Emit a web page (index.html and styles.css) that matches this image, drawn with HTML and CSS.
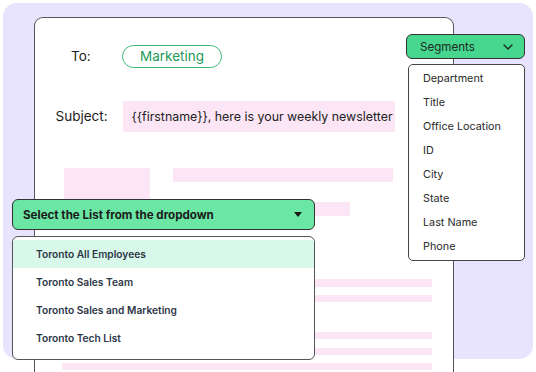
FILE: index.html
```html
<!DOCTYPE html>
<html lang="en">
<head>
    <meta charset="UTF-8">
    <meta name="viewport" content="width=device-width, initial-scale=1.0">
    <title>Newsletter segments</title>
    <link rel="stylesheet" href="styles.css">
</head>
<body>
    <div class="panel">
        <div class="card">
            <div class="to-row">
                <span class="to-label">To:</span>
                <span class="pill">Marketing</span>
            </div>
            <div class="subject-row">
                <span class="subject-label">Subject:</span>
                <span class="subject-box">{{firstname}}, here is your weekly newsletter</span>
            </div>
            <div class="lines">
                <div class="line-top">
                    <div class="block"></div>
                    <div class="col">
                        <div class="bar bar-a"></div>
                        <div class="bar bar-b"></div>
                    </div>
                </div>
                <div class="bar bar-c"></div>
                <div class="bar bar-d"></div>
                <div class="bar bar-e"></div>
                <div class="bar bar-f"></div>
                <div class="bar bar-g"></div>
            </div>
        </div>

        <div class="segments-btn">
            <span>Segments</span>
            <svg width="10" height="6" viewBox="0 0 10 6"><path d="M1 1l4 4 4-4" fill="none" stroke="#1d2b25" stroke-width="1.4" stroke-linecap="round" stroke-linejoin="round"/></svg>
        </div>
        <ul class="segments-menu">
            <li>Department</li>
            <li>Title</li>
            <li>Office Location</li>
            <li>ID</li>
            <li>City</li>
            <li>State</li>
            <li>Last Name</li>
            <li>Phone</li>
        </ul>

        <div class="list-select">
            <span>Select the List from the dropdown</span>
            <svg width="8" height="5" viewBox="0 0 8 5"><path d="M0 0h8L4 5z" fill="#1a1a1a"/></svg>
        </div>
        <ul class="list-menu">
            <li class="active">Toronto All Employees</li>
            <li>Toronto Sales Team</li>
            <li>Toronto Sales and Marketing</li>
            <li>Toronto Tech List</li>
        </ul>
    </div>
</body>
</html>
```

FILE: styles.css
```css
body {
    margin: 0;
    background: #ffffff;
    font-family: 'Inter', 'Liberation Sans', sans-serif;
    width: 536px;
    height: 372px;
    overflow: hidden;
}

.panel {
    position: relative;
    margin: 3px;
    height: 356px;
    background: #e9e4fd;
    border-radius: 14px;
}

.card {
    position: absolute;
    left: 31px;
    top: 14px;
    width: 418px;
    height: 354px;
    background: #fff;
    border: 1.5px solid #555;
    border-bottom: none;
    border-radius: 9px 9px 0 0;
}

.to-row {
    display: flex;
    align-items: center;
    margin-top: 26.5px;
    height: 23px;
}

.to-label {
    margin-left: 36px;
    width: 51px;
    font-size: 13.5px;
    color: #1c1c1c;
}

.pill {
    box-sizing: border-box;
    height: 23px;
    width: 100px;
    border: 1.5px solid #3bb877;
    border-radius: 12px;
    color: #239a58;
    font-size: 13.5px;
    display: flex;
    align-items: center;
    justify-content: center;
}

.subject-row {
    display: flex;
    align-items: center;
    margin-top: 33px;
    height: 31px;
}

.subject-label {
    margin-left: 20.5px;
    width: 67px;
    font-size: 13.5px;
    color: #1c1c1c;
}

.subject-box {
    box-sizing: border-box;
    height: 31px;
    width: 272px;
    padding-left: 9px;
    background: #fce6f5;
    font-size: 12.4px;
    color: #222;
    white-space: nowrap;
    display: flex;
    align-items: center;
}

.lines {
    margin-top: 36px;
}

.line-top {
    display: flex;
}

.block {
    margin-left: 28.5px;
    width: 86px;
    height: 32px;
    background: #fce6f5;
}

.col {
    margin-left: 23px;
}

.bar {
    background: #fce6f5;
}

.bar-a {
    width: 220px;
    height: 14px;
}

.bar-b {
    margin-top: 20px;
    width: 177px;
    height: 14px;
}

.bar-c {
    margin-top: 63px;
    margin-left: 240px;
    width: 157px;
    height: 8px;
}

.bar-d {
    margin-top: 8px;
    margin-left: 240px;
    width: 157px;
    height: 7px;
}

.bar-e {
    margin-top: 30px;
    margin-left: 240px;
    width: 157px;
    height: 7px;
}

.bar-f {
    margin-top: 9px;
    margin-left: 240px;
    width: 157px;
    height: 7px;
}

.bar-g {
    margin-top: 8px;
    margin-left: 26.5px;
    width: 370px;
    height: 7px;
}

.segments-btn {
    position: absolute;
    left: 403px;
    top: 31px;
    box-sizing: border-box;
    width: 119px;
    height: 25px;
    background: #46d68d;
    border: 1.5px solid #333;
    border-radius: 6px;
    display: flex;
    align-items: center;
    justify-content: space-between;
    padding: 0 11px 0 13px;
    font-size: 11.6px;
    color: #1d2b25;
}

.segments-menu {
    position: absolute;
    left: 405px;
    top: 61px;
    box-sizing: border-box;
    width: 117px;
    height: 197px;
    margin: 0;
    padding: 2px 0 0 14px;
    list-style: none;
    background: #fff;
    border: 1.5px solid #444;
    border-radius: 5px;
}

.segments-menu li {
    height: 24px;
    line-height: 24px;
    font-size: 10.8px;
    color: #2a2a2a;
}

.list-select {
    position: absolute;
    left: 9px;
    top: 196px;
    box-sizing: border-box;
    width: 303px;
    height: 31px;
    background: #6ce6a5;
    border: 1.5px solid #333;
    border-radius: 6px;
    display: flex;
    align-items: center;
    justify-content: space-between;
    padding: 0 12px 0 10px;
    font-size: 11.6px;
    font-weight: 700;
    color: #1a1a1a;
}

.list-menu {
    position: absolute;
    left: 9px;
    top: 233px;
    box-sizing: border-box;
    width: 303px;
    height: 124px;
    margin: 0;
    padding: 2.5px 0 0 0;
    list-style: none;
    background: #fff;
    border: 1.5px solid #555;
    border-radius: 6px;
}

.list-menu li {
    height: 28px;
    line-height: 28px;
    padding-left: 23px;
    font-size: 10.2px;
    font-weight: 600;
    color: #2e3748;
}

.list-menu li.active {
    background: #d8f8e9;
}
```
